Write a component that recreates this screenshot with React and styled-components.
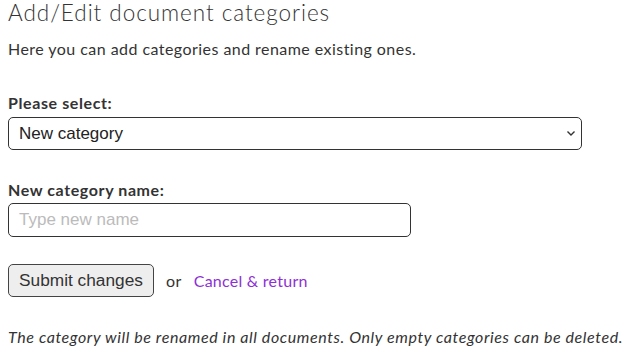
import React from 'react'
import styled, { createGlobalStyle } from 'styled-components'

const Global = createGlobalStyle`
  body {
    margin: 0;
    padding: 0 8px;
    background: #fff;
    font-family: Lato, "Open Sans", sans-serif;
    color: #333;
  }
`

const Title = styled.h2`
  margin: 0;
  font-size: 22.5px;
  font-weight: 300;
  letter-spacing: 0.95px;
  line-height: 26px;
  color: #333;
`

const Intro = styled.p`
  margin: 13px 0 0;
  font-size: 16px;
  letter-spacing: 0.45px;
  line-height: 20px;
`

const Label = styled.label`
  display: block;
  margin: ${p => p.$top}px 0 ${p => p.$bottom}px;
  font-size: 16px;
  font-weight: 700;
  letter-spacing: 0.6px;
  line-height: 20px;
  color: #333;
`

const SelectWrap = styled.div`
  position: relative;
  width: 574px;
`

const Select = styled.select`
  appearance: none;
  width: 100%;
  height: 33px;
  padding: 0 10px;
  border: 1px solid #333;
  border-radius: 5px;
  background: #fff;
  font-family: "Liberation Sans", Arial, sans-serif;
  font-size: 17px;
  color: #222;
`

const Chevron = styled.svg`
  position: absolute;
  right: 6px;
  top: 13px;
  pointer-events: none;
`

const Input = styled.input`
  box-sizing: border-box;
  width: 403px;
  height: 34px;
  padding: 0 10px;
  border: 1px solid #333;
  border-radius: 5px;
  font-family: "Liberation Sans", Arial, sans-serif;
  font-size: 17px;
  color: #222;
  &::placeholder {
    color: #bbb;
  }
`

const Actions = styled.div`
  display: flex;
  align-items: center;
  gap: 12px;
  margin-top: 27px;
  font-size: 16px;
  letter-spacing: 0.45px;
`

const Button = styled.button`
  height: 33px;
  padding: 0 10px;
  border: 1px solid #444;
  border-radius: 5px;
  background: #eee;
  font-family: "Liberation Sans", Arial, sans-serif;
  font-size: 17.3px;
  letter-spacing: 0;
  color: #333;
`

const Or = styled.span``

const Link = styled.a`
  color: #8e2fd6;
  letter-spacing: 0.25px;
  text-decoration: none;
`

const Note = styled.p`
  margin: 30px 0 0;
  font-size: 16px;
  font-style: italic;
  letter-spacing: 0.6px;
  line-height: 20px;
  white-space: nowrap;
`

export default function App() {
  return (
    <div>
      <Global />
      <Title>Add/Edit document categories</Title>
      <Intro>Here you can add categories and rename existing ones.</Intro>

      <Label $top={34} $bottom={4}>Please select:</Label>
      <SelectWrap>
        <Select defaultValue="new">
          <option value="new">New category</option>
        </Select>
        <Chevron width="10" height="7" viewBox="0 0 10 7">
          <path d="M1.5 1.5 L5 5 L8.5 1.5" fill="none" stroke="#333" strokeWidth="1.4" />
        </Chevron>
      </SelectWrap>

      <Label $top={30} $bottom={3}>New category name:</Label>
      <Input placeholder="Type new name" />

      <Actions>
        <Button>Submit changes</Button>
        <Or>or</Or>
        <Link href="#">Cancel &amp; return</Link>
      </Actions>

      <Note>The category will be renamed in all documents. Only empty categories can be deleted.</Note>
    </div>
  )
}
